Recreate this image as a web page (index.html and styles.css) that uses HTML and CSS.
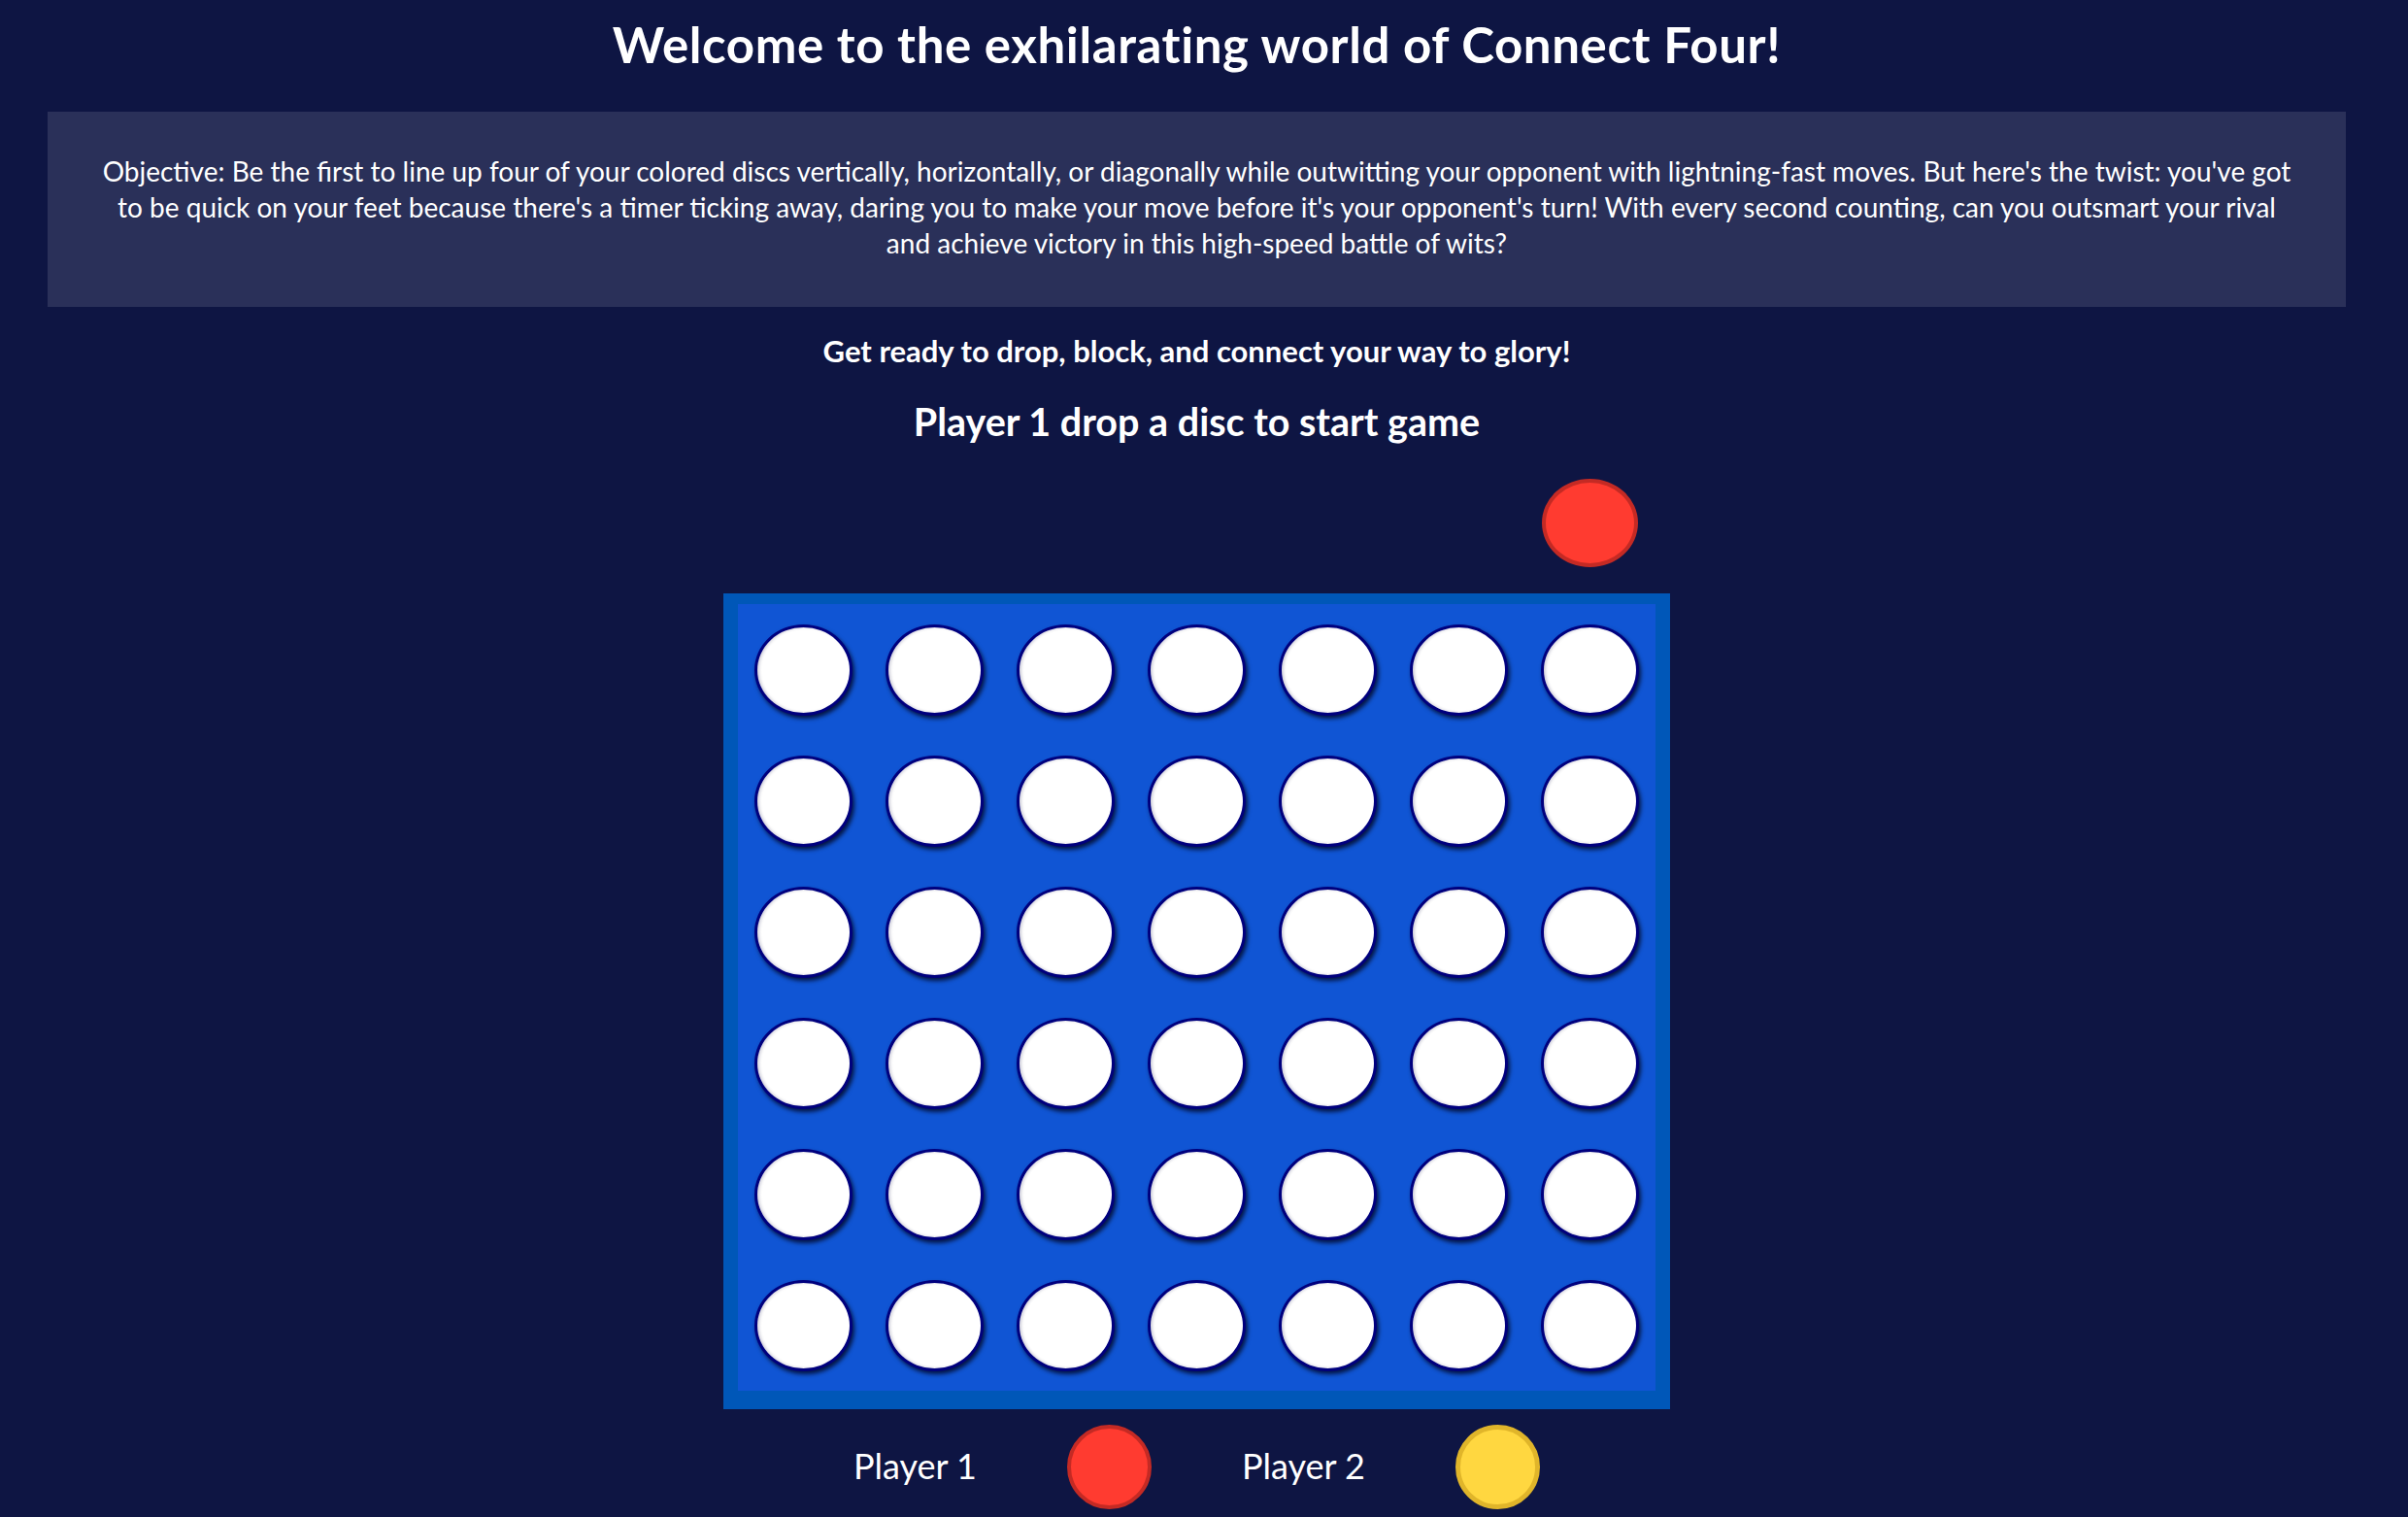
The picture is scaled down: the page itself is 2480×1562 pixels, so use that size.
FILE: index.html
```html
<!DOCTYPE html>
<html lang="en">
<head>
<meta charset="utf-8">
<title>Connect Four</title>
<link rel="stylesheet" href="styles.css">
</head>
<body>
<main class="page">
  <h1 class="title">Welcome to the exhilarating world of Connect Four!</h1>
  <section class="intro">
    <p class="intro-text">Objective: Be the first to line up four of your colored discs vertically, horizontally, or diagonally while outwitting your opponent with lightning-fast moves. But here's the twist: you've got to be quick on your feet because there's a timer ticking away, daring you to make your move before it's your opponent's turn! With every second counting, can you outsmart your rival and achieve victory in this high-speed battle of wits?</p>
  </section>
  <p class="tagline">Get ready to drop, block, and connect your way to glory!</p>
  <h2 class="status">Player 1 drop a disc to start game</h2>

  <div class="drop-row">
    <div class="drop-cell"></div>
    <div class="drop-cell"></div>
    <div class="drop-cell"></div>
    <div class="drop-cell"></div>
    <div class="drop-cell"></div>
    <div class="drop-cell"></div>
    <div class="drop-cell"><span class="disc disc-red disc-hover"></span></div>
  </div>

  <div class="board">
    <div class="grid">
      <div class="cell"><span class="hole"></span></div><div class="cell"><span class="hole"></span></div><div class="cell"><span class="hole"></span></div><div class="cell"><span class="hole"></span></div><div class="cell"><span class="hole"></span></div><div class="cell"><span class="hole"></span></div><div class="cell"><span class="hole"></span></div>
      <div class="cell"><span class="hole"></span></div><div class="cell"><span class="hole"></span></div><div class="cell"><span class="hole"></span></div><div class="cell"><span class="hole"></span></div><div class="cell"><span class="hole"></span></div><div class="cell"><span class="hole"></span></div><div class="cell"><span class="hole"></span></div>
      <div class="cell"><span class="hole"></span></div><div class="cell"><span class="hole"></span></div><div class="cell"><span class="hole"></span></div><div class="cell"><span class="hole"></span></div><div class="cell"><span class="hole"></span></div><div class="cell"><span class="hole"></span></div><div class="cell"><span class="hole"></span></div>
      <div class="cell"><span class="hole"></span></div><div class="cell"><span class="hole"></span></div><div class="cell"><span class="hole"></span></div><div class="cell"><span class="hole"></span></div><div class="cell"><span class="hole"></span></div><div class="cell"><span class="hole"></span></div><div class="cell"><span class="hole"></span></div>
      <div class="cell"><span class="hole"></span></div><div class="cell"><span class="hole"></span></div><div class="cell"><span class="hole"></span></div><div class="cell"><span class="hole"></span></div><div class="cell"><span class="hole"></span></div><div class="cell"><span class="hole"></span></div><div class="cell"><span class="hole"></span></div>
      <div class="cell"><span class="hole"></span></div><div class="cell"><span class="hole"></span></div><div class="cell"><span class="hole"></span></div><div class="cell"><span class="hole"></span></div><div class="cell"><span class="hole"></span></div><div class="cell"><span class="hole"></span></div><div class="cell"><span class="hole"></span></div>
    </div>
  </div>

  <div class="players">
    <span class="player-name">Player 1</span>
    <span class="disc disc-red disc-legend"></span>
    <span class="player-name">Player 2</span>
    <span class="disc disc-yellow disc-legend"></span>
  </div>
</main>
</body>
</html>
```

FILE: styles.css
```css
html, body {
  margin: 0;
  padding: 0;
  background: #0e1543;
}

body {
  padding-right: 15px;
  color: #ffffff;
  font-family: Lato, "Noto Sans", "Liberation Sans", sans-serif;
}

.page {
  display: flex;
  flex-direction: column;
  align-items: center;
}

.title {
  margin: 15px 0 0;
  font-size: 51px;
  line-height: 61px;
  font-weight: 700;
  letter-spacing: 0.6px;
  text-align: center;
}

.intro {
  align-self: stretch;
  margin: 39px 49px 0;
  padding: 43px 52px 47px;
  background: #2a3059;
}

.intro-text {
  margin: 0;
  font-size: 28px;
  line-height: 37px;
  text-align: center;
}

.tagline {
  margin: 27px 0 0;
  font-size: 31px;
  line-height: 37px;
  font-weight: 700;
  text-align: center;
}

.status {
  margin: 30px 0 0;
  font-size: 39.5px;
  line-height: 47px;
  font-weight: 700;
  text-align: center;
}

.drop-row {
  display: grid;
  grid-template-columns: repeat(7, 135px);
  margin-top: 36px;
  height: 118px;
  align-items: start;
}

.drop-cell {
  display: flex;
  justify-content: center;
}

.disc {
  display: block;
  box-sizing: border-box;
  border-radius: 50%;
}

.disc-red {
  background: #ff3b30;
  border: 4px solid #c42a24;
}

.disc-yellow {
  background: #ffd740;
  border: 5px solid #e0b52a;
}

.disc-hover {
  width: 99px;
  height: 91px;
}

.board {
  padding: 11px 15px 19px;
  background: #0057b8;
}

.grid {
  display: grid;
  grid-template-columns: repeat(7, 135px);
  grid-template-rows: repeat(6, 135px);
  background: #1055d4;
}

.cell {
  display: flex;
  align-items: center;
  justify-content: center;
}

.hole {
  display: block;
  box-sizing: border-box;
  width: 101px;
  height: 94px;
  border-radius: 50%;
  background: #ffffff;
  border: 3px solid #00007e;
  box-shadow: 2px 3px 4px rgba(0, 0, 20, 0.75), inset 2px 0 3px rgba(0, 0, 60, 0.18);
}

.players {
  display: flex;
  align-items: center;
  gap: 93px;
  margin-top: 16px;
}

.player-name {
  font-size: 36px;
  line-height: 43px;
  margin-top: -3px;
}

.disc-legend {
  width: 87px;
  height: 87px;
}
```
